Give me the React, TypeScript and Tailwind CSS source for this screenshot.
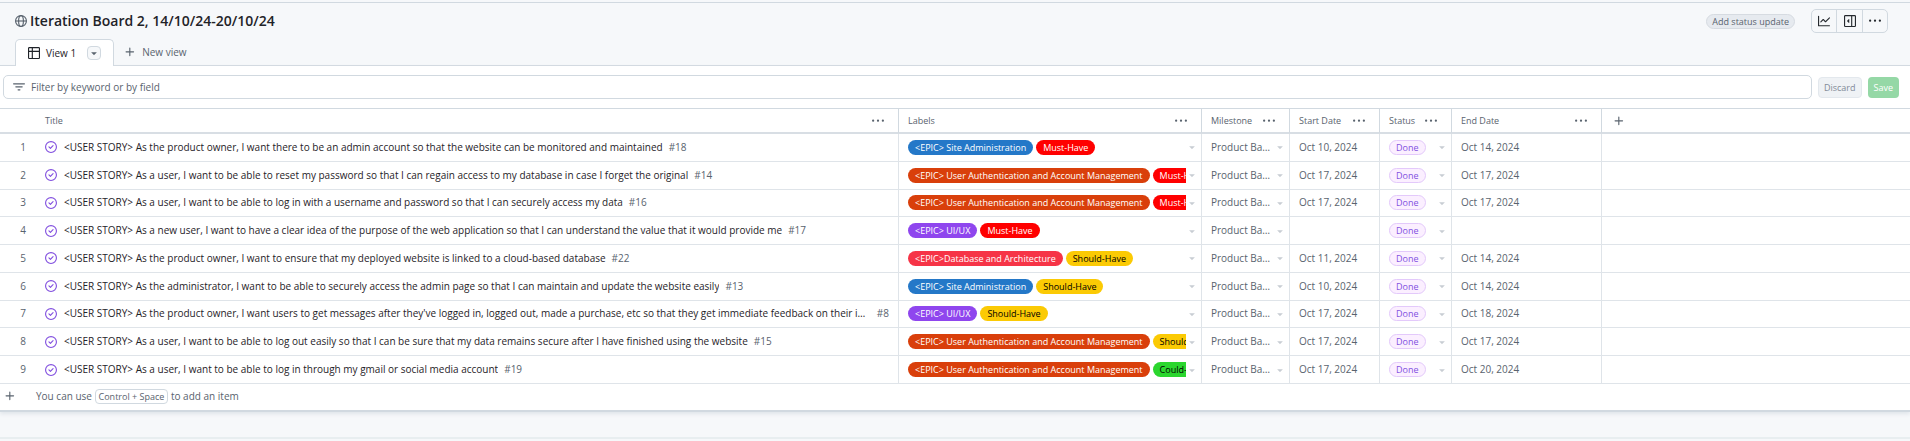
import React from "react";

const paths = {
  graph: ["M1.5 1.75V13.5h13.75a.75.75 0 0 1 0 1.5H.75a.75.75 0 0 1-.75-.75V1.75a.75.75 0 0 1 1.5 0Zm14.28 2.53-5.25 5.25a.75.75 0 0 1-1.06 0L7 7.06 4.28 9.78a.751.751 0 0 1-1.042-.018.751.751 0 0 1-.018-1.042l3.25-3.25a.75.75 0 0 1 1.06 0L10 7.94l4.72-4.72a.751.751 0 0 1 1.042.018.751.751 0 0 1 .018 1.042Z"],
  table: ["M0 1.75C0 .784.784 0 1.75 0h12.5C15.216 0 16 .784 16 1.75v12.5A1.75 1.75 0 0 1 14.25 16H1.75A1.75 1.75 0 0 1 0 14.25ZM6.5 6.5v8h7.75a.25.25 0 0 0 .25-.25V6.5Zm8-1.5V1.75a.25.25 0 0 0-.25-.25H6.5V5Zm-13 1.5v7.75c0 .138.112.25.25.25H5v-8ZM5 5V1.5H1.75a.25.25 0 0 0-.25.25V5Z"],
  sidebar: [
    "m4.177 7.823 2.396-2.396A.25.25 0 0 1 7 5.604v4.792a.25.25 0 0 1-.427.177L4.177 8.177a.25.25 0 0 1 0-.354Z",
    "M0 1.75C0 .784.784 0 1.75 0h12.5C15.216 0 16 .784 16 1.75v12.5A1.75 1.75 0 0 1 14.25 16H1.75A1.75 1.75 0 0 1 0 14.25Zm1.75-.25a.25.25 0 0 0-.25.25v12.5c0 .138.112.25.25.25H9.5v-13Zm12.5 13a.25.25 0 0 0 .25-.25V1.75a.25.25 0 0 0-.25-.25H11v13Z",
  ],
  filter: ["M.75 3h14.5a.75.75 0 0 1 0 1.5H.75a.75.75 0 0 1 0-1.5ZM3 7.75A.75.75 0 0 1 3.75 7h8.5a.75.75 0 0 1 0 1.5h-8.5A.75.75 0 0 1 3 7.75Zm3 4a.75.75 0 0 1 .75-.75h2.5a.75.75 0 0 1 0 1.5h-2.5a.75.75 0 0 1-.75-.75Z"],
  plus: ["M7.75 2a.75.75 0 0 1 .75.75V7h4.25a.75.75 0 0 1 0 1.5H8.5v4.25a.75.75 0 0 1-1.5 0V8.5H2.75a.75.75 0 0 1 0-1.5H7V2.75A.75.75 0 0 1 7.75 2Z"],
  closed: [
    "M11.28 6.78a.75.75 0 0 0-1.06-1.06L7.25 8.69 5.78 7.22a.75.75 0 0 0-1.06 1.06l2 2a.75.75 0 0 0 1.06 0l3.5-3.5Z",
    "M16 8A8 8 0 1 1 0 8a8 8 0 0 1 16 0Zm-1.5 0a6.5 6.5 0 1 0-13 0 6.5 6.5 0 0 0 13 0Z",
  ],
  kebab: ["M8 9a1.5 1.5 0 1 0 0-3 1.5 1.5 0 0 0 0 3ZM1.5 9a1.5 1.5 0 1 0 0-3 1.5 1.5 0 0 0 0 3Zm13 0a1.5 1.5 0 1 0 0-3 1.5 1.5 0 0 0 0 3Z"],
  caret: ["m4.427 7.427 3.396 3.396a.25.25 0 0 0 .354 0l3.396-3.396A.25.25 0 0 0 11.396 7H4.604a.25.25 0 0 0-.177.427Z"],
};

function Icon({ name, className = "" }: { name: keyof typeof paths; className?: string }) {
  return (
    <svg viewBox="0 0 16 16" aria-hidden="true" fill="currentColor" className={`size-3 shrink-0 overflow-visible ${className}`}>
      {paths[name].map((d) => (
        <path key={d} d={d} />
      ))}
    </svg>
  );
}

function Globe() {
  return (
    <svg viewBox="0 0 16 16" aria-hidden="true" fill="none" stroke="currentColor" strokeWidth="1.5" className="size-3 shrink-0">
      <circle cx="8" cy="8" r="7.25" />
      <ellipse cx="8" cy="8" rx="3.2" ry="7.25" />
      <path d="M1 8h14" />
    </svg>
  );
}

type Label = { text: string; style: string };

const SITE: Label = { text: "<EPIC> Site Administration", style: "bg-[#2478c8] text-white" };
const AUTH: Label = { text: "<EPIC> User Authentication and Account Management", style: "bg-[#d93f0b] text-white" };
const UIUX: Label = { text: "<EPIC> UI/UX", style: "bg-[#8f46ee] text-white" };
const DATA: Label = { text: "<EPIC>Database and Architecture", style: "bg-[#f63447] text-white" };
const MUST: Label = { text: "Must-Have", style: "bg-[#ff0000] text-white" };
const SHOULD: Label = { text: "Should-Have", style: "bg-[#fbca04] text-black" };
const COULD: Label = { text: "Could-Have", style: "bg-[#2bd62e] text-black" };

type Item = { title: string; id: number; labels: Label[]; start: string; end: string };

const items: Item[] = [
  { title: "As the product owner, I want there to be an admin account so that the website can be monitored and maintained", id: 18, labels: [SITE, MUST], start: "Oct 10, 2024", end: "Oct 14, 2024" },
  { title: "As a user, I want to be able to reset my password so that I can regain access to my database in case I forget the original", id: 14, labels: [AUTH, MUST], start: "Oct 17, 2024", end: "Oct 17, 2024" },
  { title: "As a user, I want to be able to log in with a username and password so that I can securely access my data", id: 16, labels: [AUTH, MUST], start: "Oct 17, 2024", end: "Oct 17, 2024" },
  { title: "As a new user, I want to have a clear idea of the purpose of the web application so that I can understand the value that it would provide me", id: 17, labels: [UIUX, MUST], start: "", end: "" },
  { title: "As the product owner, I want to ensure that my deployed website is linked to a cloud-based database", id: 22, labels: [DATA, SHOULD], start: "Oct 11, 2024", end: "Oct 14, 2024" },
  { title: "As the administrator, I want to be able to securely access the admin page so that I can maintain and update the website easily", id: 13, labels: [SITE, SHOULD], start: "Oct 10, 2024", end: "Oct 14, 2024" },
  { title: "As the product owner, I want users to get messages after they've logged in, logged out, made a purchase, etc so that they get immediate feedback on their interactions", id: 8, labels: [UIUX, SHOULD], start: "Oct 17, 2024", end: "Oct 18, 2024" },
  { title: "As a user, I want to be able to log out easily so that I can be sure that my data remains secure after I have finished using the website", id: 15, labels: [AUTH, SHOULD], start: "Oct 17, 2024", end: "Oct 17, 2024" },
  { title: "As a user, I want to be able to log in through my gmail or social media account", id: 19, labels: [AUTH, COULD], start: "Oct 17, 2024", end: "Oct 20, 2024" },
];

function HeaderCell({ name }: { name: string }) {
  return (
    <th scope="col" className="border-r border-[#d1d9e0] p-0 font-medium">
      <div className="flex items-center justify-between pr-[14px] pl-[9px]">
        <span>{name}</span>
        <button aria-label={`${name} column options`}>
          <Icon name="kebab" />
        </button>
      </div>
    </th>
  );
}

function Caret({ name }: { name: string }) {
  return (
    <button aria-label={name} className="ml-auto shrink-0 text-[#c8cdd3]">
      <Icon name="caret" />
    </button>
  );
}

function Row({ item, index }: { item: Item; index: number }) {
  const cell = "border-r border-b border-[#dfe4e9] p-0";
  return (
    <tr>
      <td className="border-b border-[#dfe4e9] p-0 pr-[10px] text-right">{index}</td>
      <td className={cell}>
        <div className="flex items-center pr-[9px] pl-[9px]">
          <Icon name="closed" className="text-[#8250df]" />
          <a href={`#${item.id}`} className="ml-[7px] truncate text-[#1f2328]">
            &lt;USER STORY&gt; {item.title}
          </a>
          <span className="ml-[6px] shrink-0">#{item.id}</span>
        </div>
      </td>
      <td className={cell}>
        <div className="flex items-center pr-[3px] pl-[9px]">
          <div className="flex min-w-0 gap-[3px] overflow-hidden">
            {item.labels.map((l) => (
              <span key={l.text} className={`h-[15px] shrink-0 rounded-full px-[7px] text-[9px] leading-[15px] font-medium whitespace-nowrap ${l.style}`}>
                {l.text}
              </span>
            ))}
          </div>
          <Caret name="Edit labels" />
        </div>
      </td>
      <td className={cell}>
        <div className="flex items-center pr-[3px] pl-[9px]">
          <span className="truncate">Product Backlog</span>
          <Caret name="Edit milestone" />
        </div>
      </td>
      <td className={cell}>
        <div className="pl-[9px]">{item.start}</div>
      </td>
      <td className={cell}>
        <div className="flex items-center pr-[3px] pl-[9px]">
          <span className="h-[15px] rounded-full border border-[#e3c9fb] bg-[#fbefff] px-[6px] text-[9px] leading-[13px] font-medium text-[#8250df]">Done</span>
          <Caret name="Edit status" />
        </div>
      </td>
      <td className={cell}>
        <div className="pl-[9px]">{item.end}</div>
      </td>
      <td className="border-b border-[#dfe4e9] p-0" />
    </tr>
  );
}

export default function App() {
  return (
    <div className="bg-[#f6f8fa] pt-[2px] font-['Open_Sans',sans-serif] text-[10px] leading-[15px] text-[#59636e]">
      <header className="border-t border-[#d1d9e0]">
        <div className="flex h-9 items-center pr-[22px] pl-[15px]">
          <Globe />
          <h1 className="ml-[3px] text-[14px] leading-5 font-semibold text-[#1f2328]">Iteration Board 2, 14/10/24-20/10/24</h1>
          <button className="mr-4 ml-auto h-[15px] rounded-full border border-[#d6dbe1] bg-[#e6eaef] px-[5px] text-[9px] leading-[13px] font-medium">
            Add status update
          </button>
          <div className="flex h-6 divide-x divide-[#d1d9e0] rounded-[5px] border border-[#d1d9e0] text-[#25292e]">
            <button aria-label="Insights" className="flex w-[25px] items-center justify-center"><Icon name="graph" /></button>
            <button aria-label="Project details" className="flex w-[26px] items-center justify-center"><Icon name="sidebar" /></button>
            <button aria-label="More options" className="flex w-[24px] items-center justify-center"><Icon name="kebab" /></button>
          </div>
        </div>
        <nav className="flex items-end border-b border-[#d1d9e0] pl-[15px]">
          <div className="-mb-px flex h-[27px] items-center rounded-t-[5px] border border-b-0 border-[#d1d9e0] bg-white pr-3 pl-3 text-[#1f2328]">
            <Icon name="table" />
            <a href="#view-1" className="ml-[6px]">View 1</a>
            <button aria-label="View options" className="ml-[11px] flex h-[14px] w-[14px] items-center justify-center rounded-[4px] border border-[#d1d9e0] bg-[#f6f8fa] text-[#59636e]">
              <Icon name="caret" />
            </button>
          </div>
          <button className="ml-[10px] flex h-[26px] items-center gap-[6px]">
            <Icon name="plus" />
            New view
          </button>
        </nav>
      </header>

      <main className="border-b-2 border-[#d1d9e0] bg-white shadow-[0_2px_4px_#dfe4e9]">
        <div className="flex h-[42px] items-center gap-[6px] pr-[11px] pl-[3px]">
          <label className="flex h-6 flex-1 items-center gap-[6px] rounded-[5px] border border-[#d1d9e0] pl-[9px]">
            <Icon name="filter" />
            <input aria-label="Filter by keyword or by field" placeholder="Filter by keyword or by field" className="min-w-0 flex-1 outline-none placeholder:text-[#59636e]" />
          </label>
          <button className="h-[21px] rounded-[4px] border border-[#e3e8ed] bg-[#eff2f5] px-[5px] text-[9px] leading-[19px] font-medium text-[#818b98]">Discard</button>
          <button className="h-[21px] rounded-[4px] bg-[#95d8a6] px-[6px] text-[9px] leading-[21px] font-medium text-white">Save</button>
        </div>

        <table className="h-[276px] w-full table-fixed border-separate border-spacing-0 border-t border-[#d1d9e0]">
          <colgroup>
            <col className="w-9" />
            <col className="w-[863px]" />
            <col className="w-[303px]" />
            <col className="w-[88px]" />
            <col className="w-[90px]" />
            <col className="w-[72px]" />
            <col className="w-[150px]" />
            <col />
          </colgroup>
          <thead>
            <tr className="h-[25px] text-left text-[9px] [&>th]:border-b-2 [&>th]:border-b-[#d8dee4]">
              <th aria-label="Row number" />
              <HeaderCell name="Title" />
              <HeaderCell name="Labels" />
              <HeaderCell name="Milestone" />
              <HeaderCell name="Start Date" />
              <HeaderCell name="Status" />
              <HeaderCell name="End Date" />
              <th className="p-0 pl-[11px]">
                <button aria-label="Add field" className="block"><Icon name="plus" /></button>
              </th>
            </tr>
          </thead>
          <tbody>
            {items.map((item, i) => (
              <Row key={item.id} item={item} index={i + 1} />
            ))}
          </tbody>
        </table>

        <div className="flex h-[26px] items-center pb-[2px] pl-1">
          <button aria-label="Add item" className="mr-5"><Icon name="plus" /></button>
          <p>
            You can use <kbd className="inline-block rounded-[4px] border border-[#d1d9e0] px-[3px] font-['Open_Sans',sans-serif] text-[9px] leading-[13px]">Control + Space</kbd> to add an item
          </p>
        </div>
      </main>
      <footer className="pt-[25px]">
        <div className="h-1 border-t-2 border-[#e8eef0]" />
      </footer>
    </div>
  );
}
